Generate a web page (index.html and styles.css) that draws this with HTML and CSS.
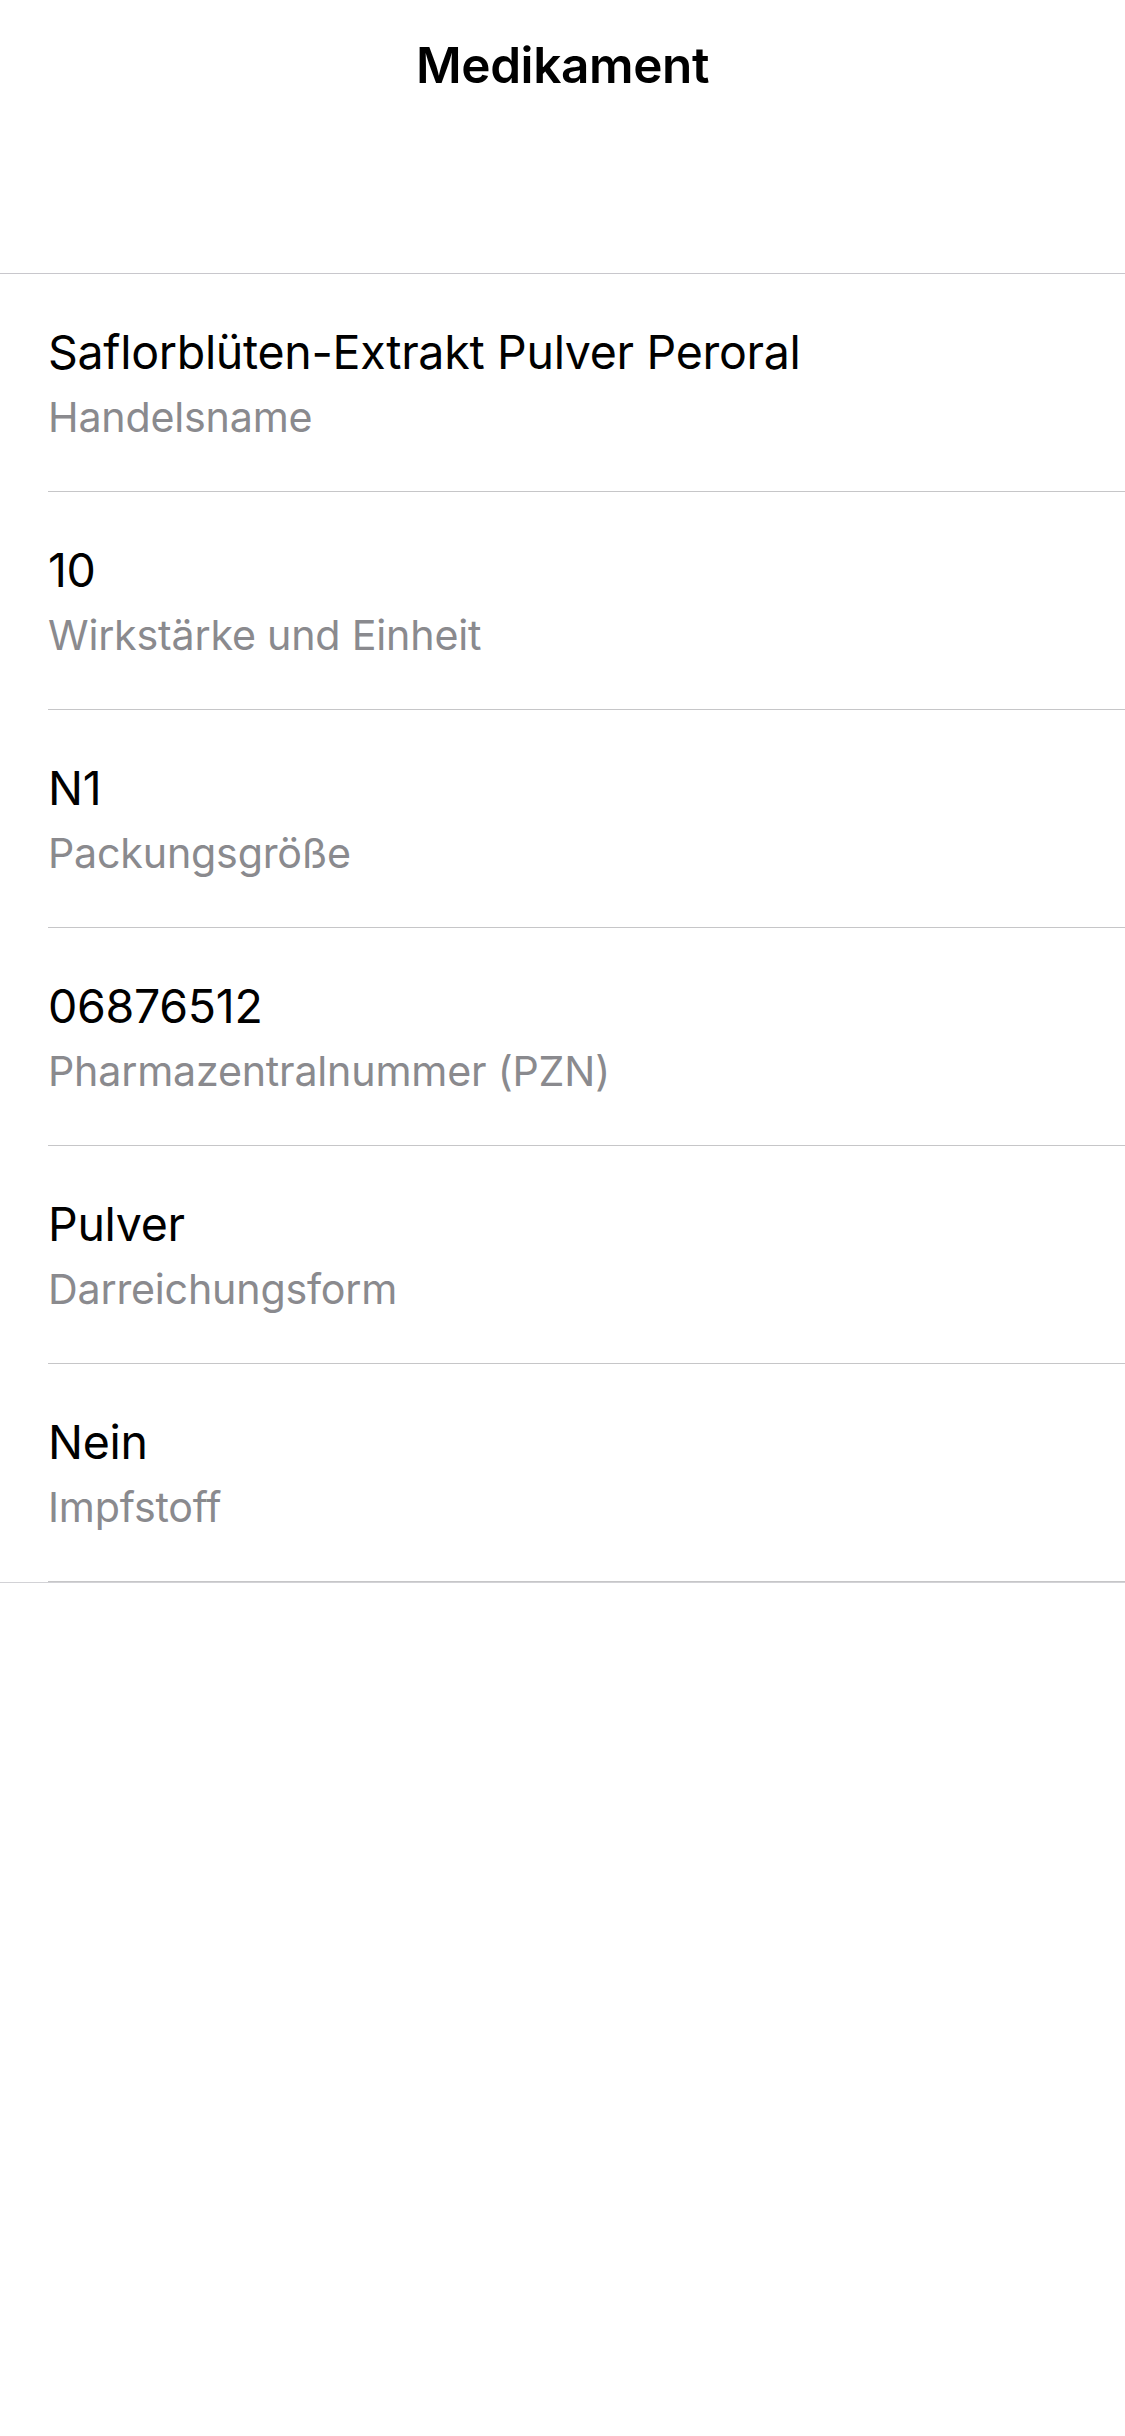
FILE: index.html
```html
<!DOCTYPE html>
<html lang="de">
<head>
<meta charset="utf-8">
<title>Medikament</title>
<link rel="stylesheet" href="styles.css">
</head>
<body>
<header class="nav">
  <h1 class="nav-title">Medikament</h1>
</header>
<ul class="list">
  <li class="row"><div class="cell"><div class="value">Saflorblüten-Extrakt Pulver Peroral</div><div class="label">Handelsname</div></div></li>
  <li class="row"><div class="cell"><div class="value">10</div><div class="label">Wirkstärke und Einheit</div></div></li>
  <li class="row"><div class="cell"><div class="value">N1</div><div class="label">Packungsgröße</div></div></li>
  <li class="row"><div class="cell"><div class="value">06876512</div><div class="label">Pharmazentralnummer (PZN)</div></div></li>
  <li class="row"><div class="cell"><div class="value">Pulver</div><div class="label">Darreichungsform</div></div></li>
  <li class="row"><div class="cell"><div class="value">Nein</div><div class="label">Impfstoff</div></div></li>
</ul>
</body>
</html>
```
FILE: styles.css
```css
html, body {
  margin: 0;
  padding: 0;
  background: #ffffff;
}
body {
  font-family: Inter, "Noto Sans", "Liberation Sans", sans-serif;
  color: #000000;
  width: 1125px;
  min-height: 2436px;
}
.nav {
  height: 273px;
  box-sizing: border-box;
  padding-top: 30px;
}
.nav-title {
  margin: 0;
  text-align: center;
  font-size: 49.5px;
  font-weight: 600;
  line-height: 70px;
  letter-spacing: -0.4px;
}
.list {
  list-style: none;
  margin: 0;
  padding: 0;
  border-top: 1px solid #c8c7cc;
  border-bottom: 1px solid #d2d2d6;
}
.row {
  padding-left: 48px;
}
.cell {
  height: 217px;
  border-bottom: 1px solid #c6c6c8;
  display: flex;
  flex-direction: column;
  justify-content: center;
  gap: 10px;
}
.value {
  font-size: 46.5px;
  line-height: 58px;
  letter-spacing: -0.3px;
}
.label {
  font-size: 41.2px;
  line-height: 52px;
  color: #8a8a8e;
  letter-spacing: -0.2px;
}
```
